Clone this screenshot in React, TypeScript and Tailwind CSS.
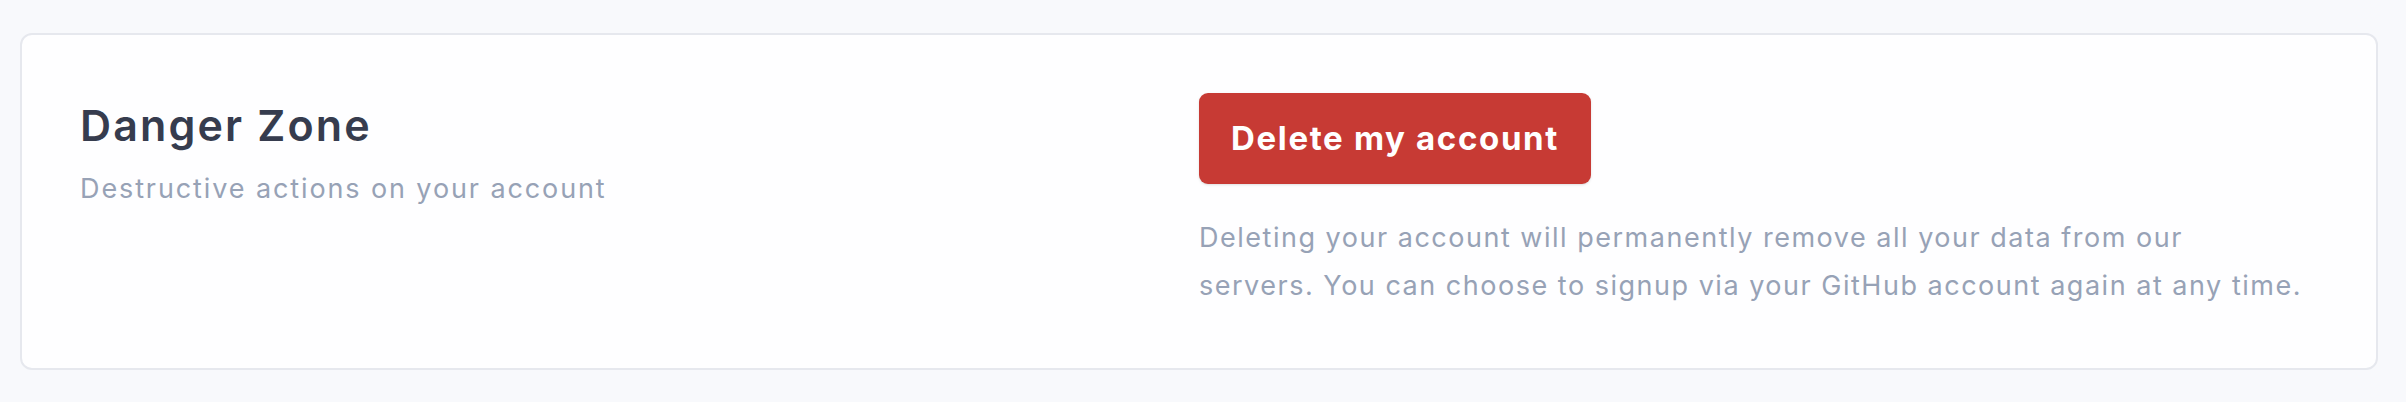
import React from 'react';

const DangerZone: React.FC = () => {
  return (
    <div className="min-h-screen bg-[#f8f9fc] pl-[20px] pr-[28px] pt-[33px] pb-[34px] font-['Inter',sans-serif]">
      <div className="grid grid-cols-2 rounded-[12px] border-2 border-[#e6e8ee] bg-[#fefeff] p-[58px]">
        <div className="pt-[6px]">
          <h2 className="text-[43px] leading-[52px] font-semibold tracking-[0.05em] text-[#363c4e]">
            Danger Zone
          </h2>
          <p className="mt-[19px] text-[27px] leading-[38px] tracking-[0.07em] text-[#97a2b6]">
            Destructive actions on your account
          </p>
        </div>
        <div>
          <button className="flex h-[91px] items-center rounded-[9px] bg-[#c73a34] px-[32px] text-[33px] font-bold tracking-[0.05em] text-white shadow-sm">
            Delete my account
          </button>
          <p className="mt-[30px] text-[27px] leading-[48px] tracking-[0.056em] text-[#97a2b6]">
            Deleting your account will permanently remove all your data from our
            <br />
            servers. You can choose to signup via your GitHub account again at any time.
          </p>
        </div>
      </div>
    </div>
  );
};

export default function App() {
  return <DangerZone />;
}
